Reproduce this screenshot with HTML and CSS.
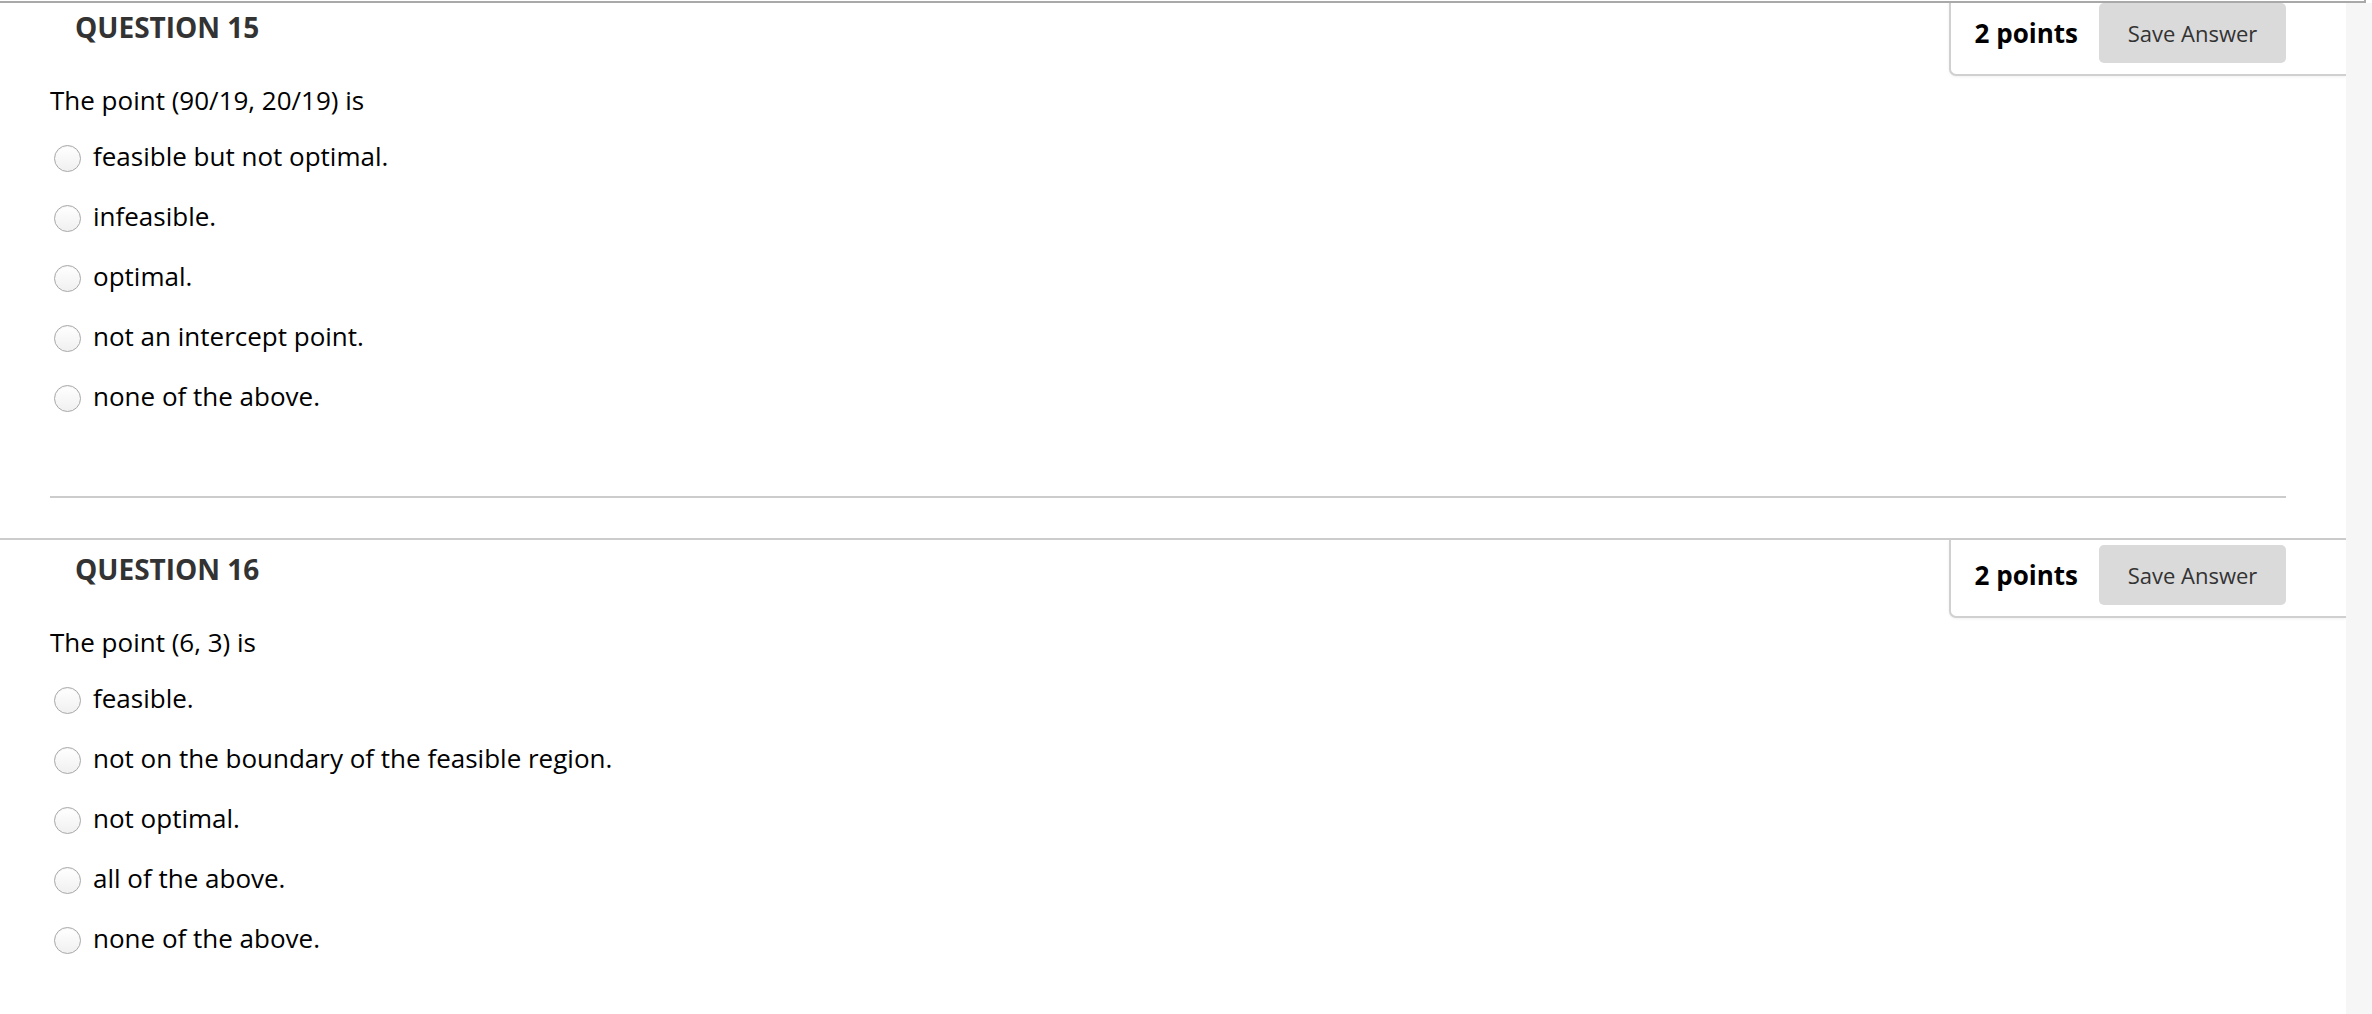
FILE: index.html
```html
<!DOCTYPE html>
<html lang="en">
<head>
<meta charset="utf-8">
<title>Questions</title>
<link rel="stylesheet" href="styles.css">
</head>
<body>
<div class="frame-edge"></div>
<div class="layout">
  <main class="main">
    <section class="question question-first">
      <div class="q-header">
        <h3 class="q-title">QUESTION 15</h3>
        <div class="q-points">
          <span class="points">2 points</span>
          <button class="save-btn" type="button">Save Answer</button>
        </div>
      </div>
      <div class="q-body">
        <p class="q-text">The point (90/19, 20/19) is</p>
        <ul class="options">
          <li class="option"><input type="radio" name="q15" class="radio"><span>feasible but not optimal.</span></li>
          <li class="option"><input type="radio" name="q15" class="radio"><span>infeasible.</span></li>
          <li class="option"><input type="radio" name="q15" class="radio"><span>optimal.</span></li>
          <li class="option"><input type="radio" name="q15" class="radio"><span>not an intercept point.</span></li>
          <li class="option"><input type="radio" name="q15" class="radio"><span>none of the above.</span></li>
        </ul>
        <div class="q-sep"></div>
      </div>
    </section>
    <section class="question">
      <div class="q-header">
        <h3 class="q-title">QUESTION 16</h3>
        <div class="q-points">
          <span class="points">2 points</span>
          <button class="save-btn" type="button">Save Answer</button>
        </div>
      </div>
      <div class="q-body">
        <p class="q-text">The point (6, 3) is</p>
        <ul class="options">
          <li class="option"><input type="radio" name="q16" class="radio"><span>feasible.</span></li>
          <li class="option"><input type="radio" name="q16" class="radio"><span>not on the boundary of the feasible region.</span></li>
          <li class="option"><input type="radio" name="q16" class="radio"><span>not optimal.</span></li>
          <li class="option"><input type="radio" name="q16" class="radio"><span>all of the above.</span></li>
          <li class="option"><input type="radio" name="q16" class="radio"><span>none of the above.</span></li>
        </ul>
        <div class="q-sep"></div>
      </div>
    </section>
  </main>
  <aside class="side-strip"></aside>
</div>
</body>
</html>
```

FILE: styles.css
```css
* { box-sizing: border-box; }

html, body {
  margin: 0;
  padding: 0;
  background: #ffffff;
  font-family: "Open Sans", "Noto Sans", "Liberation Sans", sans-serif;
  color: #000;
  overflow: hidden;
}

.frame-edge {
  width: 2366px;
  height: 3px;
  border-bottom: 2px solid #a9a9a9;
  border-right: 2px solid #a9a9a9;
}

.layout {
  display: flex;
  height: 1011px;
}

.main {
  width: 2346px;
  flex: none;
  overflow: hidden;
  background: #fff;
}

.side-strip {
  flex: 1;
  background: #f6f6f6;
}

.question {
  border-top: 2px solid #cccccc;
  margin-bottom: 40px;
}

.question-first {
  margin-top: -7px;
}

.q-header {
  display: flex;
  align-items: flex-start;
  height: 78px;
}

.q-title {
  margin: 10px 0 0 75px;
  font-size: 28px;
  line-height: 38px;
  font-weight: 700;
  color: #333;
}

.q-points {
  margin-left: auto;
  display: flex;
  align-items: center;
  gap: 21px;
  padding: 5px 60px 11px 24px;
  border-left: 2px solid #d0d0d0;
  border-bottom: 2px solid #d0d0d0;
  border-bottom-left-radius: 7px;
  box-shadow: 0 1px 3px rgba(0, 0, 0, 0.06);
  background: #fff;
}

.points {
  font-size: 26px;
  font-weight: 700;
  color: #000;
  line-height: 36px;
}

.save-btn {
  width: 187px;
  height: 60px;
  border: none;
  border-radius: 5px;
  background: #dadada;
  color: #333;
  font-family: "Open Sans", "Noto Sans", "Liberation Sans", sans-serif;
  font-size: 22px;
  padding: 0;
}

.q-body {
  padding: 0 60px 0 50px;
}

.q-text {
  margin: 6px 0 0 0;
  font-size: 26px;
  line-height: 36px;
  color: #000;
}

.options {
  list-style: none;
  margin: 20px 0 0 0;
  padding: 0;
  display: flex;
  flex-direction: column;
  gap: 24px;
}

.option {
  display: flex;
  align-items: flex-start;
  font-size: 26px;
  line-height: 36px;
  color: #000;
}

.radio {
  appearance: none;
  -webkit-appearance: none;
  width: 27px;
  height: 27px;
  margin: 7px 12px 0 4px;
  border-radius: 50%;
  border: 1.5px solid #a8a8a8;
  background: linear-gradient(#ffffff, #f0f0f0);
  box-shadow: inset 0 1px 1px rgba(0, 0, 0, 0.05);
  flex: none;
}

.q-sep {
  margin-top: 82px;
  border-top: 2px solid #cccccc;
}
```
